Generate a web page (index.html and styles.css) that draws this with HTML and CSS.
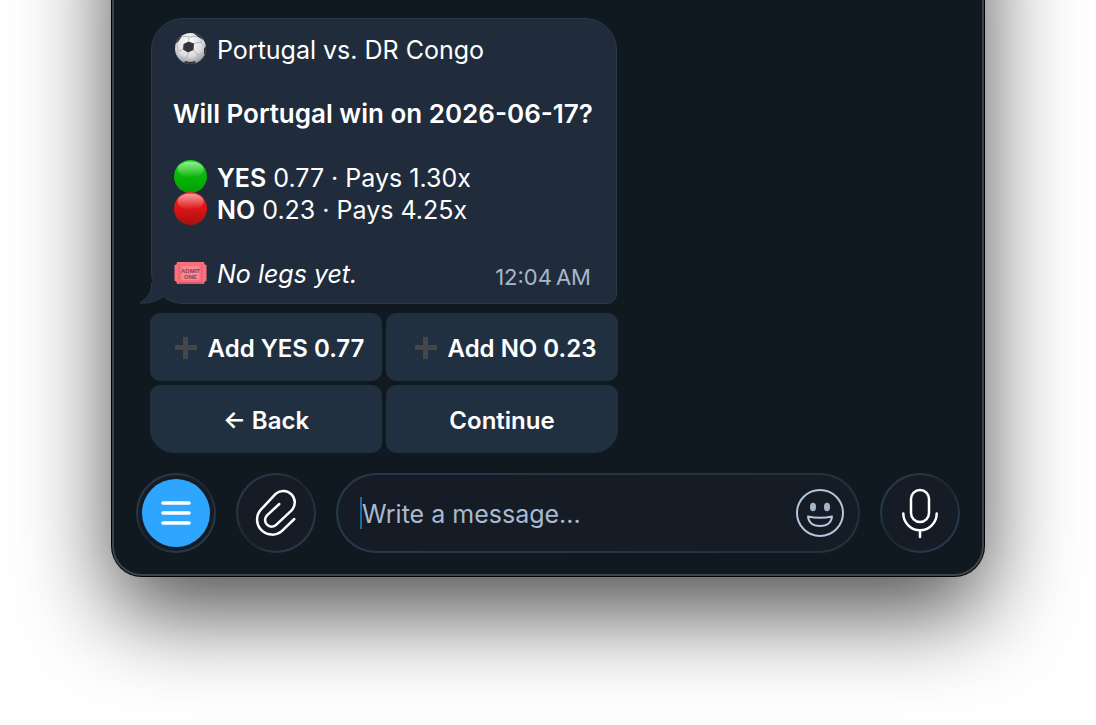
FILE: index.html
```html
<!DOCTYPE html>
<html lang="en">
<head>
  <meta charset="UTF-8">
  <meta name="viewport" content="width=device-width, initial-scale=1.0">
  <title>Chat</title>
  <link rel="stylesheet" href="styles.css">
</head>
<body>
  <main class="window">
    <section class="chat">
      <article class="bubble">
        <p class="line">
          <svg class="emoji" viewBox="0 0 34 34" aria-hidden="true">
            <defs>
              <radialGradient id="ball" cx="0.45" cy="0.3" r="0.75">
                <stop offset="0" stop-color="#ffffff"/>
                <stop offset="0.6" stop-color="#dcdce0"/>
                <stop offset="1" stop-color="#85868b"/>
              </radialGradient>
              <clipPath id="ball-clip"><circle cx="17.5" cy="16.5" r="15.5"/></clipPath>
            </defs>
            <circle cx="17.5" cy="16.5" r="15.5" fill="url(#ball)"/>
            <g clip-path="url(#ball-clip)">
              <path d="M10.500 12L15.500 9.500L21 11.500L20.500 18L15 20.500L10 17.500Z M3 7L7 3L9 4L5 10L2 12Z M20 1L27 3L30 8L25 5Z M31 15L35 14V22L31 22Z M12 29L18 30L22 29L24 34H10Z M1 20L3 23L6 29L1 27Z" fill="#34353a"/>
              <path d="M15.500 9.500L16 5L9 4M16 5L24 4M21 11.500L28 10L29 8M28 10L32 16M20.500 18L25 23L31 21M25 23L22 29M15 20.500L14 26L6 26M14 26L16 30M10 17.500L5 19L4 11M5 19L3 23" fill="none" stroke="#b4b5ba" stroke-width="1"/>
            </g>
          </svg>
          Portugal vs. DR Congo
        </p>
        <p class="line question">Will Portugal win on 2026-06-17?</p>
        <p class="line">
          <svg class="emoji" viewBox="0 0 34 34" aria-hidden="true">
            <defs>
              <linearGradient id="green" x1="0" y1="0" x2="0" y2="1">
                <stop offset="0" stop-color="#12d812"/>
                <stop offset="0.45" stop-color="#08b808"/>
                <stop offset="1" stop-color="#079c07"/>
              </linearGradient>
              <linearGradient id="shine" x1="0" y1="0" x2="0" y2="1">
                <stop offset="0" stop-color="#fff" stop-opacity="0.55"/>
                <stop offset="1" stop-color="#fff" stop-opacity="0"/>
              </linearGradient>
            </defs>
            <circle cx="17.5" cy="16.5" r="16.500" fill="url(#green)"/>
            <ellipse cx="17.5" cy="9.500" rx="13" ry="8" fill="url(#shine)"/>
          </svg>
          <b>YES</b> 0.77 · Pays 1.30x<br>
          <svg class="emoji" viewBox="0 0 34 34" aria-hidden="true">
            <defs>
              <linearGradient id="red" x1="0" y1="0" x2="0" y2="1">
                <stop offset="0" stop-color="#ee2a2a"/>
                <stop offset="0.5" stop-color="#dc1515"/>
                <stop offset="1" stop-color="#a80f0f"/>
              </linearGradient>
            </defs>
            <circle cx="17.5" cy="16.5" r="16.500" fill="url(#red)"/>
            <ellipse cx="17.5" cy="9.500" rx="13" ry="8" fill="url(#shine)"/>
          </svg>
          <b>NO</b> 0.23 · Pays 4.25x
        </p>
        <div class="last-line">
          <p class="line">
            <svg class="emoji" viewBox="0 0 34 34" aria-hidden="true">
              <path d="M4 6H31Q31 9 33.500 9V25Q31 25 31 28H4Q4 25 1.500 25V9Q4 9 4 6Z" fill="#f8717c"/>
              <path d="M5 27H30" stroke="#d94f5e" stroke-width="1.500"/>
              <rect x="8" y="9.500" width="19" height="15" fill="#fb8790" stroke="#f0707b"/>
              <path d="M6 8V26M29 8V26" stroke="#d75562" stroke-width="1" stroke-dasharray="2 1"/>
              <text class="ticket-text" x="17.5" y="17">ADMIT</text>
              <text class="ticket-text" x="17.5" y="23">ONE</text>
            </svg>
            <i>No legs yet.</i>
          </p>
          <time class="time" datetime="00:04">12:04&#8239;AM</time>
        </div>
        <svg class="tail" viewBox="0 0 26 21" aria-hidden="true">
          <path d="M12 0V4C12 11 7 16 1 20C10 20.500 19 18 25 13V0Z" fill="#202c3b"/>
          <path d="M12.500 0V4C12 11 7 16 1 20C10 20.500 19 18 25 13" fill="none" stroke="#2a3949"/>
        </svg>
      </article>

      <div class="keyboard">
        <button class="key" type="button">
          <svg class="plus" viewBox="0 0 32 32" aria-hidden="true"><path d="M15 5H20V13H29V18H20V27H15V18H7V13H15Z" fill="#464646"/></svg>
          Add YES 0.77
        </button>
        <button class="key" type="button">
          <svg class="plus" viewBox="0 0 32 32" aria-hidden="true"><path d="M15 5H20V13H29V18H20V27H15V18H7V13H15Z" fill="#464646"/></svg>
          Add NO 0.23
        </button>
        <button class="key" type="button">← Back</button>
        <button class="key" type="button">Continue</button>
      </div>
    </section>

    <form class="composer">
      <button class="round" type="button" aria-label="Menu">
        <svg viewBox="0 0 80 80">
          <circle cx="40" cy="40" r="34" fill="#2ea6ff"/>
          <path d="M27 30H53M27 40H53M27 50H53" stroke="#fff" stroke-width="3.500" stroke-linecap="round"/>
        </svg>
      </button>
      <button class="round" type="button" aria-label="Attach file">
        <svg viewBox="0 0 80 80">
          <path d="M58.300 46L46.300 57.600A15 15 0 0 1 25.100 36.400L39.900 20.600A11.500 11.500 0 0 1 56.100 36.800L40.400 51.700A6.600 6.600 0 0 1 31 42.300L43.300 31" fill="none" stroke="#fff" stroke-width="2.500" stroke-linecap="round" stroke-linejoin="round"/>
        </svg>
      </button>
      <div class="field">
        <input class="message" type="text" placeholder="Write a message..." aria-label="Message">
        <button class="smile" type="button" aria-label="Emoji">
          <svg viewBox="0 0 48 48">
            <circle cx="24" cy="24" r="23" fill="none" stroke="#b4c5dc" stroke-width="2"/>
            <ellipse cx="17" cy="18" rx="3" ry="4.200" fill="#a4b4c9"/>
            <ellipse cx="31" cy="18" rx="3" ry="4.200" fill="#a4b4c9"/>
            <path d="M12 27.500Q24 30 36 27.500Q35 37 24 37Q13 37 12 27.500Z" fill="none" stroke="#b4c5dc" stroke-width="2" stroke-linejoin="round"/>
          </svg>
        </button>
      </div>
      <button class="round" type="button" aria-label="Record voice message">
        <svg viewBox="0 0 80 80">
          <g fill="none" stroke="#fff" stroke-width="2.500" stroke-linecap="round">
            <rect x="31" y="17" width="18" height="32" rx="9"/>
            <path d="M23.300 40.500A16.700 16.700 0 0 0 56.700 40.500M40 57.500V64"/>
          </g>
        </svg>
      </button>
    </form>
  </main>
</body>
</html>
```
FILE: styles.css
```css
* {
  box-sizing: border-box;
}
body {
  display: flow-root;
  min-height: 100vh;
  margin: 0;
  background-color: #fff;
  font-family: Inter, "Liberation Sans", sans-serif;
  color: #fff;
  overflow: hidden;
}
p {
  margin: 0;
}
button {
  font-family: inherit;
  color: inherit;
  border: none;
  padding: 0;
  cursor: pointer;
}
svg {
  display: block;
}

/* The window runs off the top edge of the page */
.window {
  margin: -120px 112px 0;
  padding: 136px 22px 21px;
  background-color: #111920;
  border: 2px solid #3b444d;
  border-radius: 0 0 30px 30px;
  box-shadow: 0 0 0 1px #000, 0 36px 92px rgba(0, 0, 0, 0.7);
}

.chat {
  width: fit-content;
  max-width: 100%;
  margin: 0 14px 20px;
}
.bubble {
  position: relative;
  margin: 0 1px 9px;
  padding: 15px 23px 13px 21px;
  background-color: #202c3b;
  border: 1px solid #2a3949;
  border-radius: 32px 32px 10px 32px;
}
.line {
  font-size: 25px;
  line-height: 32px;
}
.question {
  margin: 32px 0;
  font-size: 26px;
  font-weight: 600;
}
.line b {
  font-weight: 600;
}
.last-line {
  display: flex;
  justify-content: space-between;
  align-items: flex-end;
  margin-top: 32px;
}
.time {
  padding: 0 2px;
  font-size: 22px;
  line-height: 26px;
  color: #a7b8cc;
}
.emoji {
  display: inline-block;
  width: 34px;
  height: 34px;
  margin: -12px 3px -6px 0;
  vertical-align: middle;
}
.ticket-text {
  font-family: "Liberation Sans", sans-serif;
  font-size: 6px;
  font-weight: 700;
  fill: #8b3f4b;
  text-anchor: middle;
}
.tail {
  position: absolute;
  left: -13px;
  bottom: -1px;
  width: 26px;
  height: 21px;
}

.keyboard {
  display: grid;
  grid-template-columns: 1fr 1fr;
  gap: 4px;
}
.key {
  display: flex;
  align-items: center;
  justify-content: center;
  gap: 8px;
  height: 68px;
  padding-top: 2px;
  background-color: #213040;
  border-radius: 10px;
  font-size: 24px;
  font-weight: 600;
}
.key:nth-child(3) {
  border-bottom-left-radius: 24px;
}
.key:nth-child(4) {
  border-bottom-right-radius: 24px;
}
.plus {
  width: 32px;
  height: 32px;
}

.composer {
  display: flex;
  gap: 20px;
}
.round,
.field {
  height: 80px;
  border: 2px solid transparent;
  border-radius: 40px;
  background:
    linear-gradient(#151c25, #151c25) padding-box,
    conic-gradient(#263747, #1b2630 45deg, #26394b 100deg, #26394b 180deg, #1b2630 225deg, #26394b 280deg, #263747) border-box;
}
.field {
  flex: 1;
  min-width: 0;
  display: flex;
  align-items: center;
  gap: 12px;
  padding: 0 14px 0 22px;
  background:
    linear-gradient(#151c25, #151c25) padding-box,
    linear-gradient(to right, #26394b, #223140) border-box;
}
.round {
  flex: none;
  width: 80px;
}
.round svg {
  width: 80px;
  height: 80px;
  margin: -2px;
}
.message {
  flex: 1;
  min-width: 0;
  height: 32px;
  padding: 2px 0 0;
  background: none;
  border: none;
  border-left: 2px solid #1f6aa5;
  outline: none;
  font-family: inherit;
  font-size: 25px;
  color: #fff;
}
.message::placeholder {
  color: #a9bad0;
  opacity: 1;
}
.smile {
  width: 48px;
  height: 48px;
  background: none;
}
```
